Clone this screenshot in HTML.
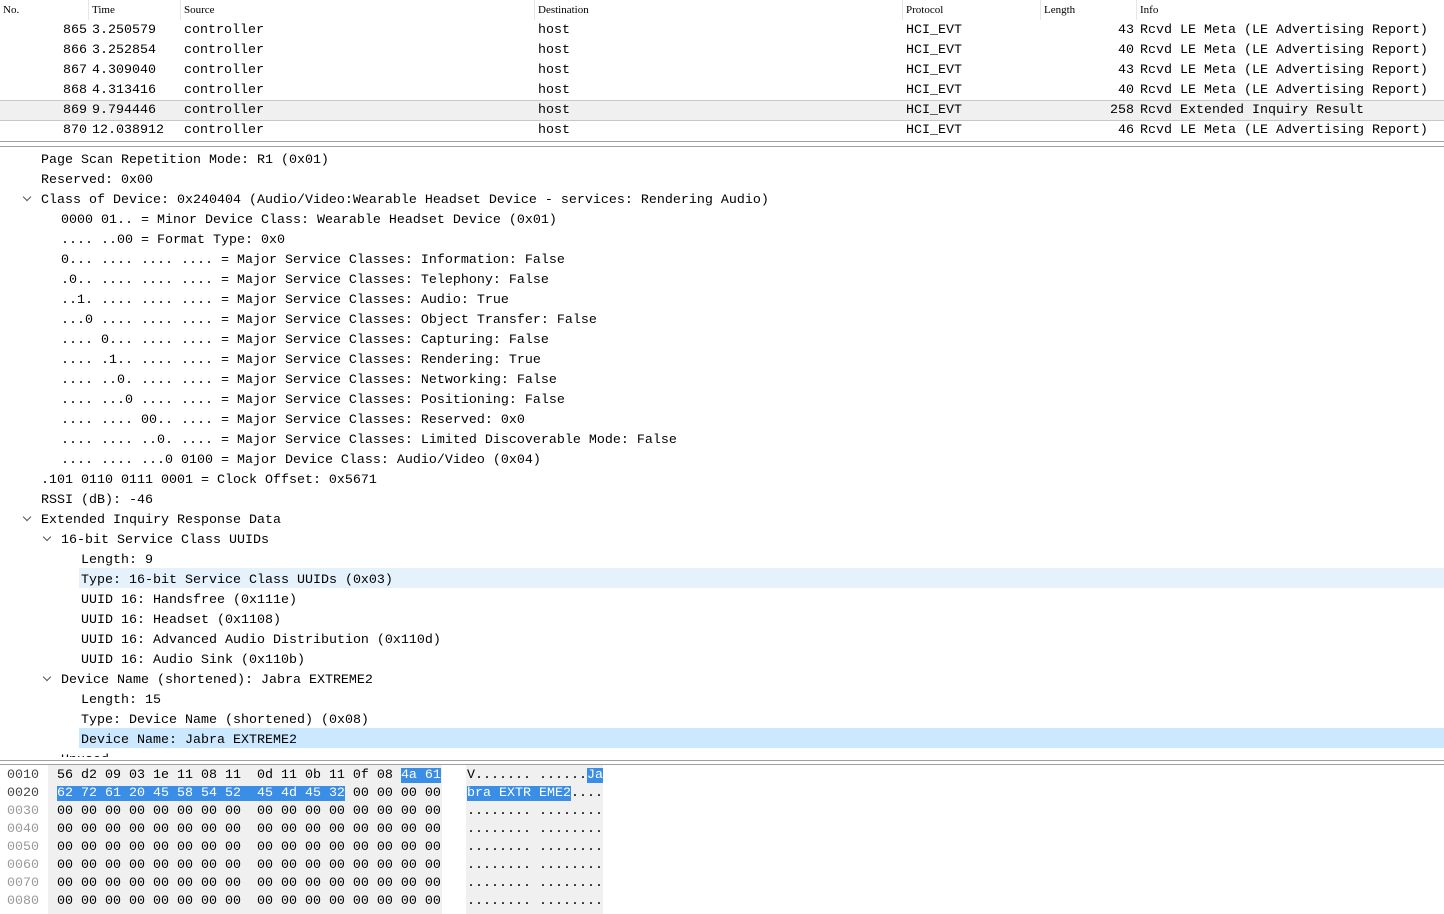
<!DOCTYPE html>
<html><head><meta charset="utf-8"><style>
body{margin:0;width:1444px;height:914px;overflow:hidden;background:#fff;position:relative;font-family:"Liberation Mono","DejaVu Sans Mono",monospace;font-size:13.33px;color:#000}
.a{position:absolute;white-space:pre;line-height:20px}
.h{position:absolute;font-family:"Liberation Serif",serif;font-size:11px;top:3px;line-height:14px;color:#000}
.vs{position:absolute;top:0;height:20px;width:1px;background:#e6e6e6}
.arr{position:absolute;width:5px;height:5px;border-right:1.3px solid #555;border-bottom:1.3px solid #555;transform:rotate(45deg)}
.hx{position:absolute;white-space:pre;line-height:18px}
.sel{background:#3a8ee6;color:#fff}
.d{position:relative;white-space:pre;line-height:20px;height:20px}
.l0{padding-left:41px}.l1{padding-left:61px}.l2{padding-left:81px}
</style></head><body>
<div class="h" style="left:3px">No.</div>
<div class="vs" style="left:88px"></div>
<div class="h" style="left:92px">Time</div>
<div class="vs" style="left:180px"></div>
<div class="h" style="left:184px">Source</div>
<div class="vs" style="left:534px"></div>
<div class="h" style="left:538px">Destination</div>
<div class="vs" style="left:902px"></div>
<div class="h" style="left:906px">Protocol</div>
<div class="vs" style="left:1040px"></div>
<div class="h" style="left:1044px">Length</div>
<div class="vs" style="left:1136px"></div>
<div class="h" style="left:1140px">Info</div>

<div style="position:absolute;left:0;top:100px;width:1444px;height:19px;background:#f0f0f0;border-top:1px solid #c8c8c8;border-bottom:1px solid #c8c8c8"></div>
<div style="position:absolute;left:0;top:141px;width:1444px;height:1px;background:#a0a0a0"></div>
<div style="position:absolute;left:0;top:146px;width:1444px;height:1px;background:#a0a0a0"></div>

<div class="a" style="left:0;top:21px;width:87px;text-align:right">865
866
867
868
869
870</div>
<div class="a" style="left:92px;top:21px">3.250579
3.252854
4.309040
4.313416
9.794446
12.038912</div>
<div class="a" style="left:184px;top:21px">controller
controller
controller
controller
controller
controller</div>
<div class="a" style="left:538px;top:21px">host
host
host
host
host
host</div>
<div class="a" style="left:906px;top:21px">HCI_EVT
HCI_EVT
HCI_EVT
HCI_EVT
HCI_EVT
HCI_EVT</div>
<div class="a" style="left:1040px;top:21px;width:94px;text-align:right">43
40
43
40
258
46</div>
<div class="a" style="left:1140px;top:21px">Rcvd LE Meta (LE Advertising Report)
Rcvd LE Meta (LE Advertising Report)
Rcvd LE Meta (LE Advertising Report)
Rcvd LE Meta (LE Advertising Report)
Rcvd Extended Inquiry Result
Rcvd LE Meta (LE Advertising Report)</div>

<div style="position:absolute;left:79px;top:568px;width:1365px;height:20px;background:#e5f1fb"></div>
<div style="position:absolute;left:79px;top:728px;width:1365px;height:20px;background:#cce8ff"></div>

<div class="arr" style="left:24px;top:194px"></div>
<div class="arr" style="left:24px;top:514px"></div>
<div class="arr" style="left:44px;top:534px"></div>
<div class="arr" style="left:44px;top:674px"></div>

<div style="position:absolute;left:0;top:148px;width:1444px;height:609px;overflow:hidden">
<div style="position:absolute;left:0;top:3px;width:1444px">
<div class="d l0">Page Scan Repetition Mode: R1 (0x01)</div>
<div class="d l0">Reserved: 0x00</div>
<div class="d l0">Class of Device: 0x240404 (Audio/Video:Wearable Headset Device - services: Rendering Audio)</div>
<div class="d l1">0000 01.. = Minor Device Class: Wearable Headset Device (0x01)</div>
<div class="d l1">.... ..00 = Format Type: 0x0</div>
<div class="d l1">0... .... .... .... = Major Service Classes: Information: False</div>
<div class="d l1">.0.. .... .... .... = Major Service Classes: Telephony: False</div>
<div class="d l1">..1. .... .... .... = Major Service Classes: Audio: True</div>
<div class="d l1">...0 .... .... .... = Major Service Classes: Object Transfer: False</div>
<div class="d l1">.... 0... .... .... = Major Service Classes: Capturing: False</div>
<div class="d l1">.... .1.. .... .... = Major Service Classes: Rendering: True</div>
<div class="d l1">.... ..0. .... .... = Major Service Classes: Networking: False</div>
<div class="d l1">.... ...0 .... .... = Major Service Classes: Positioning: False</div>
<div class="d l1">.... .... 00.. .... = Major Service Classes: Reserved: 0x0</div>
<div class="d l1">.... .... ..0. .... = Major Service Classes: Limited Discoverable Mode: False</div>
<div class="d l1">.... .... ...0 0100 = Major Device Class: Audio/Video (0x04)</div>
<div class="d l0">.101 0110 0111 0001 = Clock Offset: 0x5671</div>
<div class="d l0">RSSI (dB): -46</div>
<div class="d l0">Extended Inquiry Response Data</div>
<div class="d l1">16-bit Service Class UUIDs</div>
<div class="d l2">Length: 9</div>
<div class="d l2">Type: 16-bit Service Class UUIDs (0x03)</div>
<div class="d l2">UUID 16: Handsfree (0x111e)</div>
<div class="d l2">UUID 16: Headset (0x1108)</div>
<div class="d l2">UUID 16: Advanced Audio Distribution (0x110d)</div>
<div class="d l2">UUID 16: Audio Sink (0x110b)</div>
<div class="d l1">Device Name (shortened): Jabra EXTREME2</div>
<div class="d l2">Length: 15</div>
<div class="d l2">Type: Device Name (shortened) (0x08)</div>
<div class="d l2">Device Name: Jabra EXTREME2</div>
<div class="d l1">Unused</div>
</div>
</div>
<div style="position:absolute;left:0;top:760px;width:1444px;height:1px;background:#a0a0a0"></div>
<div style="position:absolute;left:0;top:764px;width:1444px;height:1px;background:#a0a0a0"></div>

<div style="position:absolute;left:48px;top:765px;width:394px;height:149px;background:#f0f0f0"></div>
<div style="position:absolute;left:466px;top:765px;width:137px;height:149px;background:#f0f0f0"></div>

<div class="hx" style="left:7px;top:767px;color:#444">0010
0020<span style="color:#999">
0030
0040
0050
0060
0070
0080</span></div>
<div class="hx" style="left:57px;top:767px">56 d2 09 03 1e 11 08 11  0d 11 0b 11 0f 08 <span class="sel">4a 61</span>
<span class="sel">62 72 61 20 45 58 54 52  45 4d 45 32</span> 00 00 00 00
00 00 00 00 00 00 00 00  00 00 00 00 00 00 00 00
00 00 00 00 00 00 00 00  00 00 00 00 00 00 00 00
00 00 00 00 00 00 00 00  00 00 00 00 00 00 00 00
00 00 00 00 00 00 00 00  00 00 00 00 00 00 00 00
00 00 00 00 00 00 00 00  00 00 00 00 00 00 00 00
00 00 00 00 00 00 00 00  00 00 00 00 00 00 00 00</div>
<div class="hx" style="left:467px;top:767px">V....... ......<span class="sel">Ja</span>
<span class="sel">bra EXTR EME2</span>....
........ ........
........ ........
........ ........
........ ........
........ ........
........ ........</div>
</body></html>
